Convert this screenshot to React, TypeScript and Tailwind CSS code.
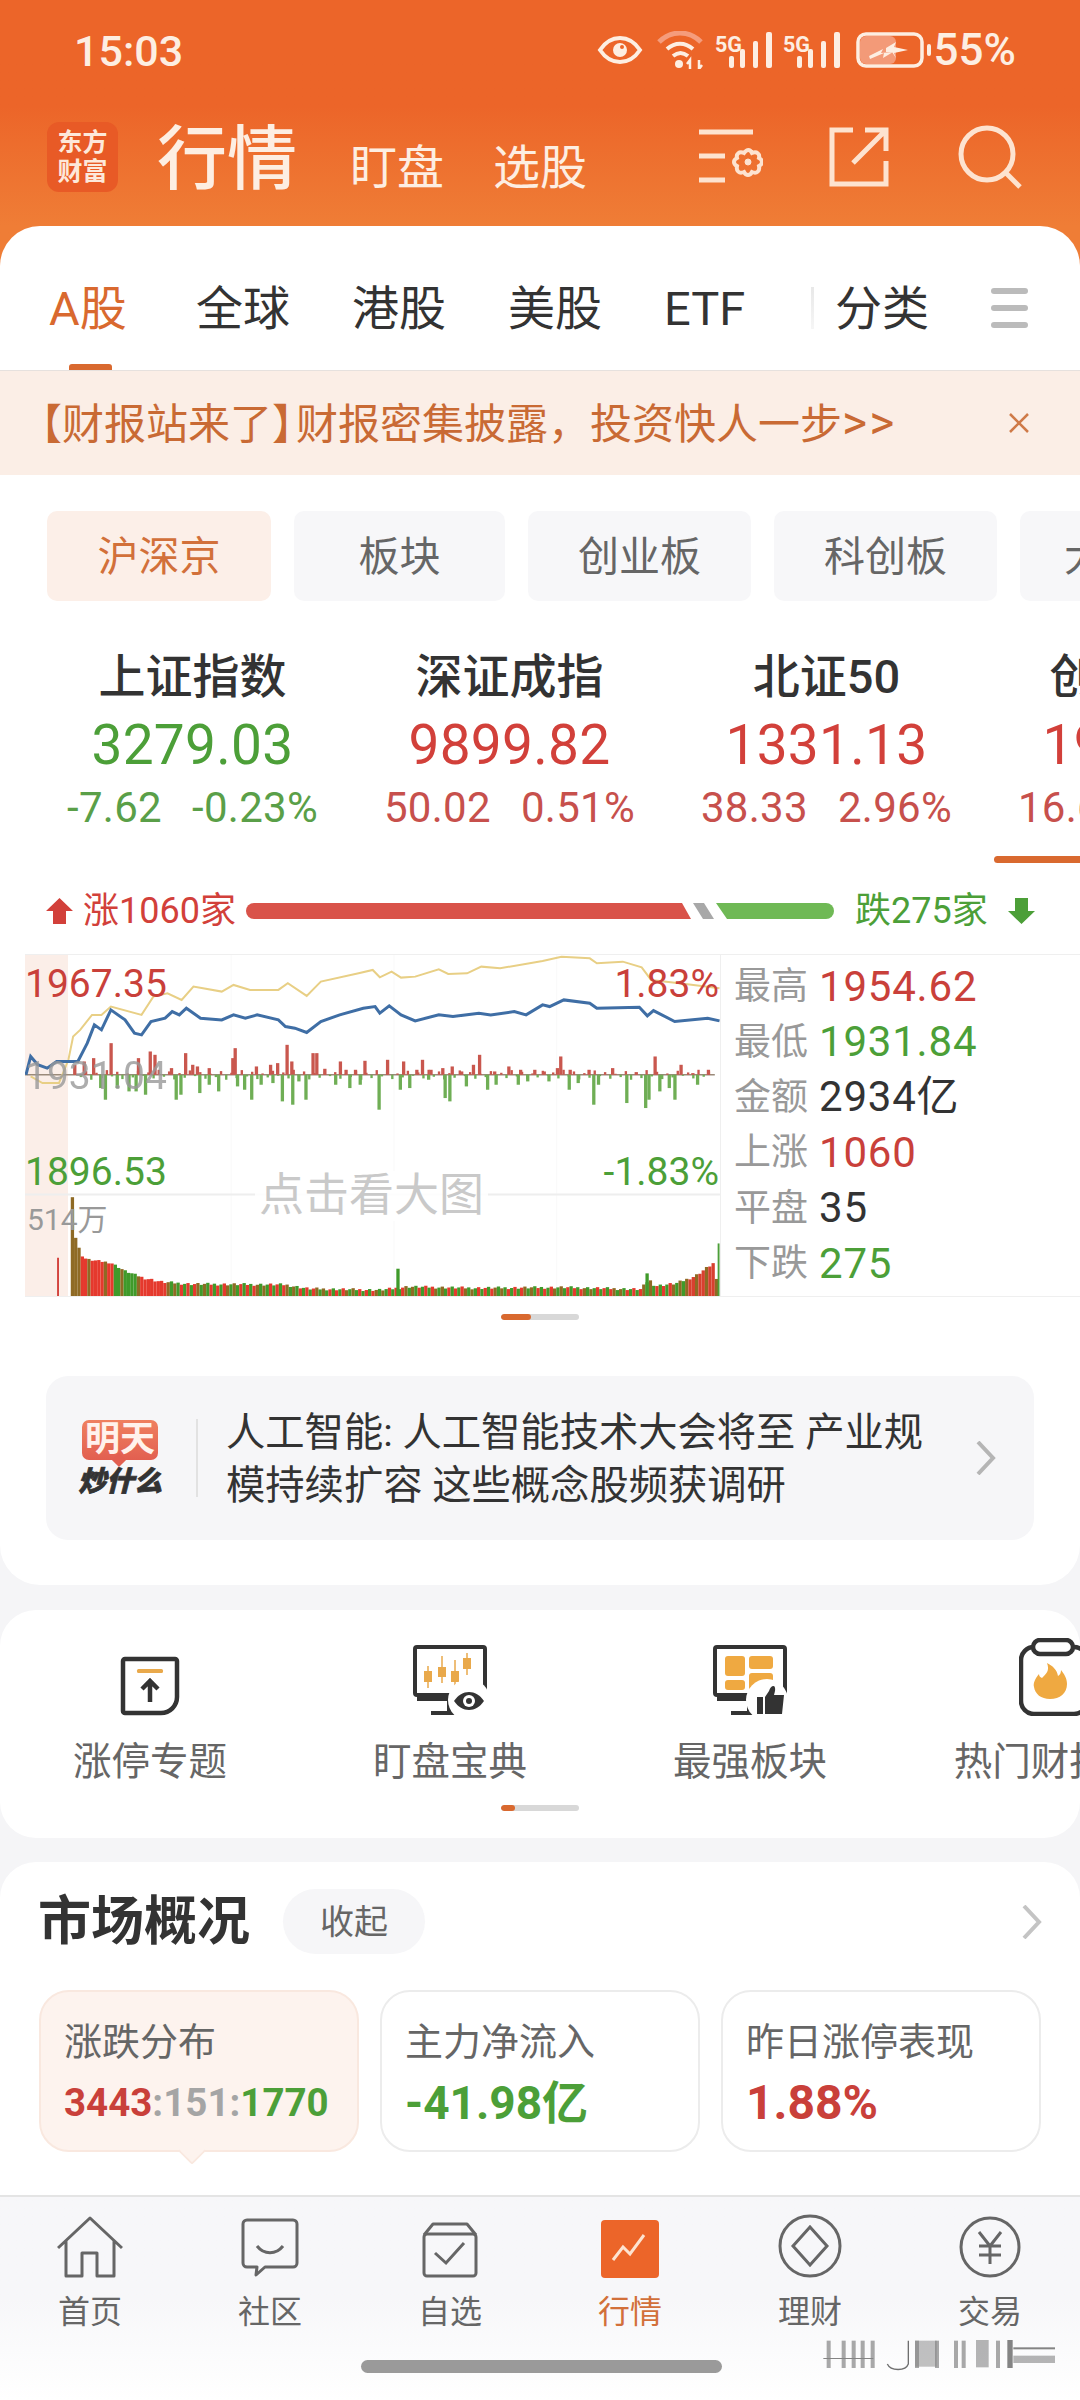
import React from "react";

const BLUE = [[55,585],[65,530],[80,555],[100,565],[120,545],[165,545],[185,490],[200,435],[215,450],[235,390],[265,420],[285,460],[300,465],[320,425],[350,415],[365,395],[380,405],[395,385],[425,415],[470,420],[495,405],[520,415],[545,405],[590,420],[605,440],[625,445],[650,458],[680,425],[720,405],[770,385],[795,380],[805,400],[825,378],[850,405],[880,423],[930,405],[960,410],[1015,400],[1040,405],[1090,395],[1115,405],[1150,375],[1165,380],[1195,360],[1250,370],[1265,385],[1355,382],[1372,408],[1385,392],[1430,425],[1500,415],[1525,423]];
const YELLOW = [[65,590],[90,610],[125,610],[145,540],[155,470],[170,450],[195,405],[215,405],[235,380],[300,405],[325,350],[355,340],[385,360],[410,320],[470,335],[495,315],[530,330],[590,330],[610,310],[650,348],[680,305],[760,280],[790,270],[805,292],[830,275],[850,293],[880,290],[930,268],[950,282],[990,280],[1020,260],[1060,265],[1150,243],[1190,230],[1250,235],[1265,250],[1320,245],[1360,262],[1380,300],[1440,310],[1525,325]];
const UP = [[232,95],[155,30],[175,40],[195,50],[290,50],[315,70],[325,60],[360,20],[390,65],[405,30],[415,25],[440,20],[495,80],[490,50],[540,25],[570,30],[585,35],[605,90],[615,40],[660,65],[668,65],[685,18],[718,40],[730,15],[750,15],[770,42],[818,45],[852,40],[892,45],[880,15],[910,15],[935,20],[955,25],[975,10],[1000,30],[1013,60],[1045,10],[1075,25],[1100,15],[1130,15],[1150,10],[1185,55],[1178,20],[1205,15],[1245,15],[1295,20],[1345,8],[1385,55],[1440,30],[1465,5],[1498,15]];
const DOWN = [[210,40],[220,75],[245,40],[270,50],[285,50],[305,60],[370,75],[380,60],[420,55],[440,30],[460,50],[500,35],[515,45],[530,75],[550,30],[575,25],[595,80],[617,90],[645,75],[630,20],[708,30],[738,40],[760,30],[800,105],[845,45],[865,40],[905,15],[940,70],[950,80],[985,35],[1030,45],[1048,30],[1095,30],[1115,20],[1160,20],[1203,45],[1222,25],[1255,90],[1265,30],[1325,85],[1365,100],[1372,75],[1395,50],[1427,75],[1415,40],[1475,30]];
const VOL_ENV = [[150,300],[156,180],[168,125],[180,110],[232,100],[262,75],[300,55],[340,42],[400,36],[600,34],[650,22],[800,18],[830,22],[860,28],[1000,24],[1190,26],[1355,20],[1372,50],[1385,30],[1430,38],[1470,60],[1508,98],[1516,40]];

const pts = (a: number[][]) => a.map((p) => p.join(",")).join(" ");

const envAt = (x: number) => {
  for (let i = 1; i < VOL_ENV.length; i++) {
    const [x0, y0] = VOL_ENV[i - 1];
    const [x1, y1] = VOL_ENV[i];
    if (x <= x1) return y0 + ((y1 - y0) * (x - x0)) / (x1 - x0);
  }
  return 40;
};

const volBars = () => {
  const out: { x: number; h: number; c: string }[] = [];
  let i = 0;
  for (let x = 150; x < 1518; x += 7) {
    const wob = ((i * 37) % 11) - 5;
    const pick = (i * 13) % 9;
    let c = pick < 4 ? "#3f9a2a" : pick < 7 ? "#e5392d" : "#8f6a24";
    if (x < 168) c = "#8f6a24";
    else if (x < 238) c = i % 5 === 0 ? "#8f6a24" : "#e5392d";
    else if (x < 295) c = i % 5 === 0 ? "#8f6a24" : "#3f9a2a";
    else if (x < 350) c = "#e5392d";
    else if (x > 1450) c = i % 3 === 0 ? "#8f6a24" : "#d8402f";
    out.push({ x, h: Math.max(6, envAt(x) + wob * (x < 300 ? 0.6 : 0.8)), c });
    i++;
  }
  out.push({ x: 840, h: 82, c: "#3f9a2a" });
  out.push({ x: 1368, h: 68, c: "#3f9a2a" });
  return out;
};

const smallTicks = () => {
  const out: { x: number; h: number; up: boolean }[] = [];
  let i = 0;
  for (let x = 158; x < 1510; x += 11) {
    out.push({ x, h: ((i * 17) % 13) + 3, up: i % 2 === 0 });
    i++;
  }
  return out;
};

const Signal = () => (
  <svg width="58" height="36" viewBox="0 0 58 36" className="block">
    <text x="0" y="20" fontSize="22" fontWeight="700" fontFamily="Roboto" fill="#fdeee2" textLength="27" lengthAdjust="spacingAndGlyphs">5G</text>
    <rect x="14" y="24" width="5" height="12" rx="2" fill="#fdeee2" />
    <rect x="25" y="17" width="5" height="19" rx="2" fill="#fdeee2" />
    <rect x="38" y="9" width="5" height="27" rx="2" fill="#fdeee2" />
    <rect x="51" y="0" width="6" height="36" rx="2" fill="#fdeee2" />
  </svg>
);

const StatusBar = () => (
  <div className="flex h-[100px] items-center justify-between pl-[74px] pr-[64px] text-[#fdeee2]">
    <span className="mt-[2px] text-[43px] font-medium leading-none">15:03</span>
    <div className="flex items-center">
      <svg width="46" height="28" viewBox="0 0 44 28" className="block">
        <path d="M2 14C8 5 15 2 22 2s14 3 20 12c-6 9-13 12-20 12S8 23 2 14z" fill="none" stroke="#fdeee2" strokeWidth="4" />
        <circle cx="22" cy="14" r="7" fill="#fdeee2" />
        <circle cx="24" cy="11" r="2" fill="#ec6529" />
      </svg>
      <svg width="48" height="38" viewBox="0 0 48 38" className="ml-[14px] block" fill="none">
        <path d="M2 11C14-1 32-1 44 11" stroke="#f59c7c" strokeWidth="5" />
        <path d="M10 18c8-7 18-7 26 0" stroke="#fdeee2" strokeWidth="4" />
        <path d="M16 25c5-4 10-4 15 0" stroke="#fdeee2" strokeWidth="4" />
        <circle cx="22" cy="33" r="4" fill="#fdeee2" />
        <path d="M33 38v-9l-3 4M42 29v9l3-4" stroke="#fdeee2" strokeWidth="2.5" />
      </svg>
      <div className="ml-[10px]"><Signal /></div>
      <div className="ml-[10px]"><Signal /></div>
      <svg width="76" height="36" viewBox="0 0 76 36" className="ml-[15px] block">
        <rect x="2" y="2" width="64" height="32" rx="8" fill="none" stroke="#fdeee2" strokeWidth="3.5" />
        <rect x="4" y="4" width="36" height="28" rx="6" fill="#f39a78" />
        <path d="M14 27l14-6-1 5 10-6-12 1 2-4-14 7z" fill="#fdeee2" />
        <path d="M30 16l10-6-2 5 14 3-14 3 2 5-4-6-6 0z" fill="#fdeee2" />
        <rect x="71" y="12" width="4" height="12" rx="2" fill="#fdeee2" />
      </svg>
      <span className="ml-[2px] text-[44px] font-medium leading-none">55%</span>
    </div>
  </div>
);

const TitleBar = () => (
  <div className="flex h-[126px] pl-[47px] text-[#fdeee2]">
    <div className="mt-[22px] flex h-[70px] w-[71px] flex-col items-center justify-center rounded-[12px] bg-[#e85a26] text-[25px] font-bold leading-[29px] text-[#fde8da]">
      <span>东方</span>
      <span>财富</span>
    </div>
    <span className="ml-[39px] mt-[21px] text-[70px] font-medium leading-[78px]">行情</span>
    <span className="ml-[53px] mt-[40px] text-[47px] leading-[56px]">盯盘</span>
    <span className="ml-[49px] mt-[40px] text-[47px] leading-[56px]">选股</span>
    <svg width="64" height="58" viewBox="0 0 64 58" className="ml-[112px] mt-[29px] block" fill="none" stroke="#fde3d0" strokeWidth="5">
      <path d="M0 3h54M0 27h26M0 51h26" />
      <path d="M45 24c3-4 6-4 8 0 5-2 8 1 7 5 4 2 4 6 0 8 1 5-2 8-7 6-2 4-6 4-8 0-5 2-8-1-7-6-4-2-4-6 0-8-1-4 2-7 7-5z" strokeWidth="4" />
      <circle cx="49" cy="33" r="3" fill="#fde3d0" strokeWidth="1" />
    </svg>
    <svg width="60" height="60" viewBox="0 0 60 60" className="ml-[66px] mt-[27px] block" fill="none" stroke="#fde3d0" strokeWidth="5">
      <path d="M24 3H3v54h54V34" />
      <path d="M36 3h21v21M57 3L24 36" />
    </svg>
    <svg width="64" height="64" viewBox="0 0 64 64" className="ml-[69px] mt-[25px] block" fill="none" stroke="#fde3d0" strokeWidth="5">
      <circle cx="29" cy="29" r="26" />
      <path d="M47 47l15 15" />
    </svg>
  </div>
);

const Tabs = () => (
  <div className="relative flex h-[144px] items-center pl-[49px] pt-[20px] text-[47px] leading-none text-[#333333]">
    <span className="w-[147px] text-[#d9692f]">A股</span>
    <span className="w-[156px]">全球</span>
    <span className="w-[156px]">港股</span>
    <span className="w-[156px]">美股</span>
    <span className="w-[171px]">ETF</span>
    <span className="relative w-[156px]">
      分类
      <span className="absolute -left-[24px] top-[2px] h-[42px] w-[3px] bg-gradient-to-b from-[#e8e8e8] to-[#f6f6f6]" />
    </span>
    <div className="flex w-[37px] flex-col gap-[11px]">
      <div className="h-[6px] rounded-full bg-[#bbbbbb]" />
      <div className="h-[6px] rounded-full bg-[#bbbbbb]" />
      <div className="h-[6px] rounded-full bg-[#bbbbbb]" />
    </div>
    <div className="absolute bottom-0 left-[69px] h-[6px] w-[43px] rounded-t-[3px] bg-[#d9692f]" />
  </div>
);

const Banner = () => (
  <div className="flex h-[105px] items-center justify-between border-t border-[#e6e1de] bg-[#fbeee6] pl-[20px] pr-[50px] text-[42px] leading-none text-[#c96a34]">
    <span className="whitespace-nowrap">
      <span className="mr-[-18px]">【财报站来了】</span>财报密集披露，投资快人一步
      <span className="text-[48px] tracking-[2px]">&gt;&gt;</span>
    </span>
    <svg width="22" height="22" viewBox="0 0 22 22" className="block" stroke="#cf7a48" strokeWidth="2.5">
      <path d="M2 2l18 18M20 2L2 20" />
    </svg>
  </div>
);

const chips = [
  { t: "沪深京", w: "w-[224px]", on: true },
  { t: "板块", w: "w-[211px]" },
  { t: "创业板", w: "w-[223px]" },
  { t: "科创板", w: "w-[223px]" },
  { t: "大盘", w: "w-[170px]" },
];

const Chips = () => (
  <div className="mt-[36px] flex h-[90px] gap-[23px] overflow-hidden pl-[47px]">
    {chips.map((c) => (
      <div
        key={c.t}
        className={`${c.w} flex shrink-0 items-center justify-center rounded-[10px] pt-[2px] text-[41px] leading-none ${c.on ? "bg-[#fcefe8] text-[#d2703a]" : "bg-[#f7f7f9] text-[#666666]"}`}
      >
        {c.t}
      </div>
    ))}
  </div>
);

const indices = [
  { n: "上证指数", v: "3279.03", a: "-7.62", b: "-0.23%", c: "text-[#4c9f38]", s: "text-[#5a9f48]" },
  { n: "深证成指", v: "9899.82", a: "50.02", b: "0.51%", c: "text-[#d2403a]", s: "text-[#c7504c]" },
  { n: "北证50", v: "1331.13", a: "38.33", b: "2.96%", c: "text-[#d2403a]", s: "text-[#c7504c]" },
  { n: "创业板指", v: "1913.27", a: "16.60", b: "0.87%", c: "text-[#d2403a]", s: "text-[#c7504c]", on: true },
];

const Indices = () => (
  <div className="mt-[48px] flex h-[223px] overflow-hidden pl-[34px]">
    {indices.map((d) => (
      <div key={d.n} className="flex w-[317px] shrink-0 flex-col items-center">
        <span className="text-[47px] font-medium leading-[56px] text-[#333333]">{d.n}</span>
        <span className={`mt-[10px] text-[55px] tracking-[0.3px] leading-[60px] ${d.c}`}>{d.v}</span>
        <div className={`mt-[10px] flex gap-[30px] whitespace-nowrap text-[42px] leading-[46px] tracking-[0.3px] ${d.s}`}>
          <span>{d.a}</span>
          <span>{d.b}</span>
        </div>
        {d.on && <div className="mt-[25px] h-[7px] w-[300px] shrink-0 rounded-full bg-[#d9692f]" />}
      </div>
    ))}
  </div>
);

const UpDown = () => (
  <div className="mt-[14px] flex h-[50px] items-center pl-[46px] text-[36px] leading-none">
    <svg width="27" height="26" viewBox="0 0 27 26" className="block" fill="#d2403a">
      <path d="M13.5 0L27 13h-7v13H7V13H0z" />
    </svg>
    <span className="ml-[10px] w-[163px] text-[#d2403a]">涨1060家</span>
    <svg width="590" height="16" viewBox="0 0 590 16" className="block">
      <path d="M8 0H436L445 16H8a8 8 0 0 1 0-16z" fill="#d9534a" />
      <path d="M447 0H458L468 16H457z" fill="#a8a8a8" />
      <path d="M470 0H580a8 8 0 0 1 0 16H481z" fill="#6fb955" />
    </svg>
    <span className="ml-[19px] w-[153px] text-[#4c9f38]">跌275家</span>
    <svg width="27" height="26" viewBox="0 0 27 26" className="block" fill="#4c9f38">
      <path d="M7 0h13v13h7L13.5 26 0 13h7z" />
    </svg>
  </div>
);

const stats = [
  { l: "最高", v: "1954.62", c: "text-[#c9403a]" },
  { l: "最低", v: "1931.84", c: "text-[#4c9f38]" },
  { l: "金额", v: "2934亿", c: "text-[#333333]" },
  { l: "上涨", v: "1060", c: "text-[#c9403a]" },
  { l: "平盘", v: "35", c: "text-[#333333]" },
  { l: "下跌", v: "275", c: "text-[#4c9f38]" },
];

const Chart = () => (
  <div className="relative h-[343px] w-[696px] shrink-0 border-y border-r border-[#efefef]">
    <div className="absolute inset-y-0 left-0 w-[43px] bg-[#fbeee8]" />
    <svg viewBox="53 225 1473 1025" preserveAspectRatio="none" className="absolute inset-0 block h-full w-full">
      {[490, 835, 1180].map((x) => (
        <line key={x} x1={x} x2={x} y1="225" y2="1250" stroke="#f9f9f9" strokeWidth="1" vectorEffect="non-scaling-stroke" />
      ))}
      <line x1="53" x2="1526" y1="945" y2="945" stroke="#eeeeee" strokeWidth="2" vectorEffect="non-scaling-stroke" />
      <line x1="53" x2="1515" y1="585" y2="585" stroke="#9a8a7a" strokeWidth="1.5" vectorEffect="non-scaling-stroke" />
      {smallTicks().map((t) => (
        <rect key={`t${t.x}`} x={t.x} y={t.up ? 585 - t.h : 585} width="5" height={t.h} fill={t.up ? "#c9574e" : "#6fae55"} />
      ))}
      {UP.map(([x, h]) => (
        <rect key={`u${x}`} x={x} y={585 - h} width="7" height={h} fill="#c9574e" />
      ))}
      {DOWN.map(([x, h]) => (
        <rect key={`d${x}`} x={x} y={585} width="7" height={h} fill="#6fae55" />
      ))}
      <polyline points={pts(YELLOW)} fill="none" stroke="#e8cf85" strokeWidth="2" vectorEffect="non-scaling-stroke" />
      <polyline points={pts(BLUE)} fill="none" stroke="#3f6ea5" strokeWidth="3" vectorEffect="non-scaling-stroke" />
      <rect x="121" y="1135" width="4" height="115" fill="#d2403a" />
      {volBars().map((b) => (
        <rect key={`${b.x}-${b.h}`} x={b.x} y={1250 - b.h} width="7" height={b.h} fill={b.c} />
      ))}
      <rect x="1521" y="1092" width="4" height="158" fill="#4c9f38" />
    </svg>
    <span className="absolute left-0 top-[7px] text-[39px] leading-[44px] text-[#c9403a]">1967.35</span>
    <span className="absolute right-[1px] top-[7px] text-[39px] leading-[44px] text-[#c9403a]">1.83%</span>
    <span className="absolute left-0 top-[99px] text-[39px] leading-[44px] text-[#999999] opacity-80">1931.04</span>
    <span className="absolute left-0 top-[195px] text-[39px] leading-[44px] text-[#4c9f38]">1896.53</span>
    <span className="absolute right-[1px] top-[195px] text-[39px] leading-[44px] text-[#4c9f38]">-1.83%</span>
    <span className="absolute left-[230px] top-[216px] bg-white/90 px-[4px] text-[45px] leading-[50px] text-[#c9c9c9]">点击看大图</span>
    <span className="absolute left-[2px] top-[247px] text-[30px] leading-[36px] text-[#999999]">514万</span>
  </div>
);

const ChartRow = () => (
  <div className="mt-[18px] flex pl-[25px]">
    <Chart />
    <div className="flex h-[343px] flex-1 flex-col border-y border-[#efefef] pl-[13px] pt-[4px]">
      {stats.map((s) => (
        <div key={s.l} className="flex h-[55.4px] items-center">
          <span className="w-[85px] text-[37px] leading-none text-[#999999]">{s.l}</span>
          <span className={`text-[42px] leading-none tracking-[0.8px] ${s.c}`}>{s.v}</span>
        </div>
      ))}
    </div>
  </div>
);

const Dots = ({ wide }: { wide?: boolean }) => (
  <div className="mx-auto flex h-[6px] w-[78px] overflow-hidden rounded-full bg-[#d8d8d8]">
    <div className={`${wide ? "w-[30px]" : "w-[14px]"} rounded-full bg-[#d9692f]`} />
  </div>
);

const NewsCard = () => (
  <div className="mx-[46px] mt-[56px] flex h-[164px] items-center rounded-[22px] bg-[#f6f6f8] pl-[32px]">
    <div className="flex w-[84px] flex-col items-center">
      <div className="relative flex h-[40px] w-[76px] items-center justify-center rounded-[7px] bg-gradient-to-b from-[#ef8060] to-[#e25f50] text-[35px] font-bold leading-none text-[#fff2ec]">
        <span className="relative z-10">明天</span>
        <div className="absolute -bottom-[5px] left-[32px] h-[10px] w-[10px] rotate-45 bg-[#e25f50]" />
      </div>
      <span className="mt-[7px] whitespace-nowrap text-[28px] font-black italic leading-[30px] text-[#333333] [-webkit-text-stroke:0.8px_#333333]">炒什么</span>
    </div>
    <div className="ml-[34px] h-[78px] w-[2px] bg-[#e2e2e2]" />
    <div className="ml-[28px] w-[710px] pt-[3px] text-[39.3px] leading-[53px] text-[#333333]">
      <div className="whitespace-nowrap">人工智能: 人工智能技术大会将至 产业规</div>
      <div className="whitespace-nowrap">模持续扩容 这些概念股频获调研</div>
    </div>
    <svg width="20" height="34" viewBox="0 0 20 34" className="ml-[40px] block" fill="none" stroke="#b5b5b5" strokeWidth="4">
      <path d="M2 1l15 16L2 33" />
    </svg>
  </div>
);

const IconLimit = () => (
  <svg width="60" height="60" viewBox="0 0 60 60" className="block" fill="none">
    <path d="M5 3h50a2 2 0 0 1 2 2v36a16 16 0 0 1-16 16H5a2 2 0 0 1-2-2V5a2 2 0 0 1 2-2z" stroke="#333333" strokeWidth="4.5" />
    <rect x="17" y="13" width="26" height="4" rx="1.5" fill="#e9a94b" />
    <path d="M30 46V24M22 33l8-8 8 8" stroke="#333333" strokeWidth="4.5" />
  </svg>
);

const Monitor = ({ children }: { children: React.ReactNode }) => (
  <svg width="74" height="72" viewBox="0 0 74 72" className="block" fill="none">
    <path d="M2 4a2 2 0 0 1 2-2h66a2 2 0 0 1 2 2v46H4a2 2 0 0 1-2-2z" stroke="#333333" strokeWidth="4" transform="translate(0 1)" />
    <path d="M4 55h32M36 55v14M18 69h24" stroke="#333333" strokeWidth="4" />
    {children}
  </svg>
);

const IconCandles = () => (
  <Monitor>
    <g fill="#e9a94b" stroke="#e9a94b" strokeWidth="1.5">
      <path d="M15 22v22M29 12v27M42 16v28M54 9v22" />
      <rect x="11" y="27" width="8" height="11" stroke="none" />
      <rect x="25" y="23" width="8" height="10" stroke="none" />
      <rect x="38" y="27" width="8" height="11" stroke="none" />
      <rect x="50" y="14" width="8" height="11" stroke="none" />
    </g>
    <circle cx="56" cy="56" r="21" fill="#ffffff" />
    <path d="M41 57c8-12 22-12 30 0-8 12-22 12-30 0z" fill="#333333" />
    <circle cx="56" cy="57" r="6" fill="#ffffff" />
    <circle cx="56" cy="57" r="3" fill="#333333" />
  </Monitor>
);

const IconBoard = () => (
  <Monitor>
    <g fill="#efa941">
      <rect x="12" y="12" width="20" height="20" rx="3" />
      <rect x="36" y="12" width="24" height="13" rx="3" />
      <rect x="12" y="36" width="20" height="10" rx="3" />
      <rect x="36" y="29" width="24" height="17" rx="3" />
    </g>
    <circle cx="54" cy="56" r="21" fill="#ffffff" />
    <rect x="44" y="53" width="6" height="17" fill="#333333" />
    <path d="M52 53l4-6c1-3 2-5 5-5 2 2 1 6 0 9h10l-2 19H52z" fill="#333333" />
  </Monitor>
);

const IconHot = () => (
  <svg width="62" height="78" viewBox="0 0 62 78" className="block" fill="none">
    <rect x="2" y="9" width="66" height="67" rx="13" stroke="#333333" strokeWidth="4.5" />
    <rect x="14" y="2" width="40" height="14" rx="7" fill="#ffffff" stroke="#333333" strokeWidth="4.5" />
    <path d="M28 25c3 8-1 11-5 15-2-1-3-2-3-4-4 5-6 9-5 13 1 7 7 12 16 12 10 0 17-6 17-15 0-6-3-10-6-14 0 3-1 5-3 6-1-6-5-10-11-13z" fill="#efa941" />
  </svg>
);

const tools = [
  { t: "涨停专题", i: <IconLimit /> },
  { t: "盯盘宝典", i: <IconCandles /> },
  { t: "最强板块", i: <IconBoard /> },
  { t: "热门财报季", i: <IconHot /> },
];

const Tools = () => (
  <section className="mt-[25px] h-[228px] shrink-0 overflow-hidden rounded-[36px] bg-white">
    <div className="flex">
      {tools.map((x) => (
        <div key={x.t} className="flex w-[300px] shrink-0 flex-col items-center">
          <div className="flex h-[106px] items-end">{x.i}</div>
          <span className="mt-[23px] whitespace-nowrap text-[38.5px] leading-[46px] text-[#666666]">{x.t}</span>
        </div>
      ))}
    </div>
    <div className="mt-[20px]"><Dots wide={false} /></div>
  </section>
);

const cards = [
  {
    t: "涨跌分布",
    on: true,
    v: (
      <span className="text-[38.5px] font-bold leading-none">
        <span className="text-[#c9403a]">3443</span>
        <span className="text-[#a5a5a5]">:151:</span>
        <span className="text-[#4c9f38]">1770</span>
      </span>
    ),
  },
  { t: "主力净流入", v: <span className="text-[46px] font-bold leading-none text-[#4c9f38]">-41.98亿</span> },
  { t: "昨日涨停表现", v: <span className="text-[48px] font-bold leading-none text-[#c9403a]">1.88%</span> },
];

const Market = () => (
  <section className="mt-[24px] h-[333px] shrink-0 rounded-t-[36px] bg-white">
    <div className="flex items-center pl-[38px] pr-[38px] pt-[27px]">
      <h2 className="text-[53px] font-bold leading-[64px] text-[#333333]">市场概况</h2>
      <div className="ml-[33px] flex h-[65px] w-[142px] items-center justify-center rounded-full bg-[#f6f6f8] text-[34px] leading-none text-[#666666]">收起</div>
      <svg width="20" height="34" viewBox="0 0 20 34" className="ml-auto block" fill="none" stroke="#c4c4c4" strokeWidth="4">
        <path d="M2 1l15 16L2 33" />
      </svg>
    </div>
    <div className="mt-[36px] flex gap-[21px] pl-[39px]">
      {cards.map((c) => (
        <div
          key={c.t}
          className={`relative flex h-[162px] w-[320px] flex-col rounded-[30px] border-2 pl-[23px] pt-[27px] ${c.on ? "border-[#f9e8df] bg-[#fdf3ee]" : "border-[#ececec] bg-white"}`}
        >
          <span className="text-[38px] leading-[46px] text-[#666666]">{c.t}</span>
          <div className="mt-[12px] flex h-[52px] items-center whitespace-nowrap">{c.v}</div>
          {c.on && (
            <div className="absolute -bottom-[11px] left-[141px] h-[20px] w-[20px] rotate-45 rounded-[3px] border-b-2 border-r-2 border-[#f9e8df] bg-[#fdf3ee]" />
          )}
        </div>
      ))}
    </div>
  </section>
);

const stroke = { fill: "none", stroke: "#666666", strokeWidth: 3 };

const navItems = [
  {
    t: "首页",
    i: (
      <svg width="66" height="62" viewBox="0 0 66 62" className="block" {...stroke}>
        <path d="M1 32L33 2l32 30M9 25v35h16V37h15v23h17V25" strokeLinejoin="round" />
      </svg>
    ),
  },
  {
    t: "社区",
    i: (
      <svg width="58" height="60" viewBox="0 0 58 60" className="block" {...stroke}>
        <path d="M6 2h46a4 4 0 0 1 4 4v39a4 4 0 0 1-4 4H24l-9 8 1-8H6a4 4 0 0 1-4-4V6a4 4 0 0 1 4-4z" strokeLinejoin="round" />
        <path d="M16 28c7 9 19 9 26 0" />
      </svg>
    ),
  },
  {
    t: "自选",
    i: (
      <svg width="56" height="56" viewBox="0 0 56 56" className="block" {...stroke}>
        <path d="M2 13L11 2h34l9 11" strokeLinejoin="round" />
        <rect x="2" y="12" width="52" height="42" rx="3" />
        <path d="M13 31l11 10 18-20" />
      </svg>
    ),
  },
  {
    t: "行情",
    on: true,
    i: (
      <svg width="58" height="58" viewBox="0 0 58 58" className="block">
        <rect width="58" height="58" rx="4" fill="#ec6529" />
        <path d="M12 40l10-13 7 7 14-19" fill="none" stroke="#fde3d0" strokeWidth="3" />
      </svg>
    ),
  },
  {
    t: "理财",
    i: (
      <svg width="64" height="64" viewBox="0 0 64 64" className="block" {...stroke}>
        <circle cx="32" cy="32" r="30" />
        <path d="M32 13l17 19-17 19-17-19z" />
      </svg>
    ),
  },
  {
    t: "交易",
    i: (
      <svg width="62" height="62" viewBox="0 0 62 62" className="block" {...stroke}>
        <circle cx="31" cy="31" r="29" />
        <path d="M20 16l11 14 11-14M31 30v18M20 30h22M20 39h22" />
      </svg>
    ),
  },
];

const Nav = () => (
  <nav className="relative h-[205px] shrink-0 border-t-2 border-[#e4e4e4] bg-gradient-to-b from-[#f7f7f9] via-[#f7f7f9] to-white">
    <div className="flex">
      {navItems.map((n) => (
        <div key={n.t} className="flex w-[180px] flex-col items-center">
          <div className="flex h-[81px] items-end">{n.i}</div>
          <span className={`mt-[14px] text-[32px] leading-[40px] ${n.on ? "text-[#d2703a]" : "text-[#666666]"}`}>{n.t}</span>
        </div>
      ))}
    </div>
    <div className="ml-[361px] mt-[28px] h-[13px] w-[361px] rounded-full bg-[#9a9a9a]" />
    <svg width="240" height="42" viewBox="60 60 720 126" className="absolute bottom-[24px] left-[820px] block blur-[0.6px]">
      <g fill="#444444" opacity="0.65">
        {[80, 125, 155, 182, 212, 345, 405, 462, 485, 588].map((x) => (
          <rect key={x} x={x} y="80" width="12" height="82" opacity="0.7" />
        ))}
        <rect x="345" y="80" width="65" height="78" opacity="0.5" />
        <rect x="528" y="78" width="38" height="82" opacity="0.6" />
        <rect x="622" y="78" width="16" height="84" />
        <rect x="640" y="100" width="125" height="6" />
        <rect x="640" y="125" width="125" height="22" opacity="0.6" />
        <rect x="70" y="132" width="150" height="3" />
      </g>
      <path d="M262 150c10 22 55 22 63 0V80" fill="none" stroke="#333333" strokeWidth="4" opacity="0.7" />
    </svg>
  </nav>
);

export default function App() {
  return (
    <div className="flex h-[2400px] w-[1080px] flex-col overflow-hidden bg-[#f5f5f7] font-['Roboto','Noto_Sans_CJK_SC',sans-serif]">
      <header className="h-[266px] shrink-0 bg-gradient-to-b from-[#ec6529] from-[40%] to-[#ef7d36] to-[85%]">
        <StatusBar />
        <TitleBar />
      </header>
      <section className="relative -mt-[40px] h-[1359px] shrink-0 rounded-[40px] bg-white">
        <Tabs />
        <Banner />
        <Chips />
        <Indices />
        <UpDown />
        <ChartRow />
        <div className="mt-[17px]"><Dots wide /></div>
        <NewsCard />
      </section>
      <Tools />
      <Market />
      <Nav />
    </div>
  );
}
